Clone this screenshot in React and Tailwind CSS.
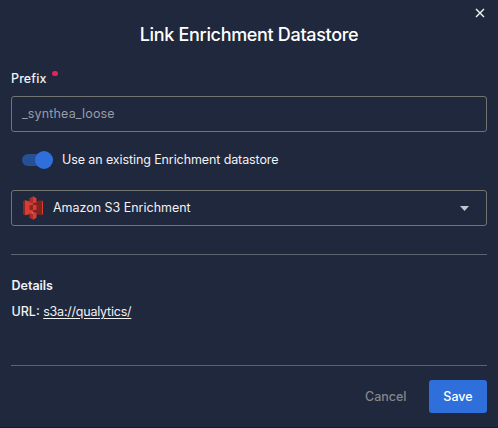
function S3Icon() {
  return (
    <svg width="20" height="24" viewBox="0 0 20 24" className="shrink-0">
      <path fill="#8c2620" d="M0 5.2 2 4.2V19.3L0 18.3Z" />
      <path fill="#d83d35" d="m2 4.2 8 1.8v11.6L2 19.3Z" />
      <path fill="#7f231e" d="m18 4.2-8 1.8v11.6l8 1.7 2-1V5.2Z" />
      <path fill="#d83d35" d="m19 4.7 1 .5v13.1l-1 .5Z" />
      <path fill="#a92d27" d="m6.5 2.2 3.5-2v7.1L6.5 6.5Z" />
      <path fill="#d83d35" d="m13.5 2.2-3.5-2v7.1l3.5-.8Z" />
      <path fill="#8c2620" d="m6.5 9.3 3.5-.5v5.4l-3.5-.5Z" />
      <path fill="#d83d35" d="m13.5 9.3-3.5-.5v5.4l3.5-.5Z" />
      <path fill="#e58b83" d="m6.5 17 3.5-.4 3.5.4-3.5.8Z" />
      <path fill="#a92d27" d="m6.5 17 3.5.8v6l-3.5-2Z" />
      <path fill="#d83d35" d="m13.5 17-3.5.8v6l3.5-2Z" />
    </svg>
  );
}

export default function App() {
  return (
    <div className="flex h-[428px] w-[498px] flex-col border-b border-[#1a1b2e] bg-[#20283d] px-[11px] font-['Inter',sans-serif] text-[12.5px] leading-5 text-[#f1f2f4]">
      <div className="flex h-6 justify-end pt-[8px] pr-[2px]">
        <button aria-label="Close" className="h-[10px] w-[10px]">
          <svg width="10" height="10" viewBox="0 0 10 10" stroke="#f4f5f7" strokeWidth="1.4">
            <path d="m1 1 8 8M9 1 1 9" />
          </svg>
        </button>
      </div>
      <h1 className="h-[22px] text-center text-[18px] leading-[22px] font-medium tracking-[-0.33px] text-white">
        Link Enrichment Datastore
      </h1>
      <label className="mt-[22px] flex h-5 gap-[5px] pt-px font-medium tracking-[0.12px]">
        Prefix
        <span className="mt-[2px] h-[5px] w-[6px] rounded-full bg-[#e6215c]" />
      </label>
      <div className="mt-[8px] flex h-9 shrink-0 items-center rounded-[3px] border border-[#747371] px-[10px] tracking-[0.15px] text-[#999ca5]">
        _synthea_loose
      </div>
      <div className="mt-[18px] flex h-5 items-center pl-[11px]">
        <div className="flex h-[18px] w-[31px] items-center">
          <div className="flex h-3 w-full items-center justify-end rounded-full bg-[#264f95]">
            <div className="h-[18px] w-[18px] shrink-0 rounded-full bg-[#2f6fdb]" />
          </div>
        </div>
        <span className="ml-[9px] -mt-px tracking-[-0.1px]">Use an existing Enrichment datastore</span>
      </div>
      <div className="mt-[20px] flex h-9 shrink-0 items-center rounded-[3px] border border-[#747371] pl-[11px] pr-[17px]">
        <S3Icon />
        <span className="ml-[10px] flex-1 tracking-[-0.02px]">Amazon S3 Enrichment</span>
        <svg width="9" height="5" viewBox="0 0 9 5" fill="#c3c6cc">
          <path d="M0 0h9L4.5 5Z" />
        </svg>
      </div>
      <div className="mt-[28px] h-px shrink-0 bg-[#5d6371]" />
      <h2 className="mt-[21px] h-5 pl-[0.5px] font-semibold">Details</h2>
      <div className="mt-[6px] flex h-5 gap-[3.5px] pl-[0.5px]">
        <span className="font-medium">URL:</span>
        <a className="tracking-[-0.22px] underline underline-offset-2">s3a://qualytics/</a>
      </div>
      <div className="mt-[43px] h-px shrink-0 bg-[#5d6371]" />
      <div className="mt-[14px] flex h-[33px] items-center justify-end gap-[22.5px]">
        <button className="font-medium text-[#858688]">Cancel</button>
        <button className="h-[33px] w-[58px] rounded-[3px] bg-[#2f6fdb] font-medium text-white">Save</button>
      </div>
    </div>
  );
}
